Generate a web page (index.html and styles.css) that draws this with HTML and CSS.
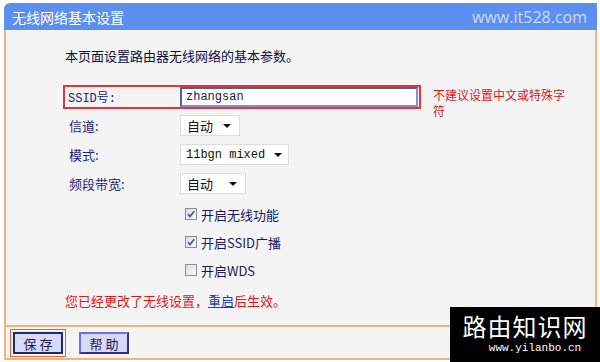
FILE: index.html
```html
<!DOCTYPE html>
<html lang="zh-CN">
<head>
  <meta charset="UTF-8" />
  <meta name="viewport" content="width=device-width, initial-scale=1.0"/>
  <title>无线网络基本设置</title>
  <link rel="stylesheet" href="styles.css">
</head>
<body>

  <div class="header">
    <span class="title">无线网络基本设置</span>
    <span class="site">www.it528.com</span>
  </div>

  <div class="panel">
    <p class="intro">本页面设置路由器无线网络的基本参数。</p>

    <div class="row ssid-row">
      <div class="ssid-box">
        <span class="label">SSID号:</span>
        <input class="text-input" type="text" value="zhangsan">
      </div>
      <span class="warn">不建议设置中文或特殊字<br>符</span>
    </div>

    <div class="row">
      <span class="label">信道:</span>
      <span class="select w-auto">自动 <i class="arrow"></i></span>
    </div>
    <div class="row">
      <span class="label">模式:</span>
      <span class="select w-mode mono">11bgn mixed <i class="arrow"></i></span>
    </div>
    <div class="row">
      <span class="label">频段带宽:</span>
      <span class="select w-band">自动 <i class="arrow"></i></span>
    </div>

    <div class="checks">
      <div class="check-row">
        <span class="box"><svg viewBox="0 0 10 10"><path d="M2 5.2 L4 7.5 L8.2 2.2" /></svg></span>
        <span>开启无线功能</span>
      </div>
      <div class="check-row">
        <span class="box"><svg viewBox="0 0 10 10"><path d="M2 5.2 L4 7.5 L8.2 2.2" /></svg></span>
        <span>开启SSID广播</span>
      </div>
      <div class="check-row">
        <span class="box"></span>
        <span>开启WDS</span>
      </div>
    </div>

    <p class="notice">您已经更改了无线设置，<a href="#">重启</a>后生效。</p>
  </div>

  <div class="footer">
    <span class="btn-focus"><button class="btn save">保 存</button></span>
    <button class="btn help">帮 助</button>
  </div>

  <div class="watermark">
    <div class="wm-name">路由知识网</div>
    <div class="wm-url">www.yilanbo.cn</div>
  </div>

</body>
</html>
```

FILE: styles.css
```css
body {
  margin: 0;
  background: #fff;
  font-family: "Noto Sans CJK SC", sans-serif;
  font-size: 13px;
  color: #1a1a50;
  width: 600px;
  height: 362px;
  overflow: hidden;
  position: relative;
}

.header {
  margin: 3px 3px 0 4px;
  height: 27px;
  background: #5c8ff0;
  border-top-left-radius: 6px;
  display: flex;
  align-items: center;
  justify-content: space-between;
  padding: 0 10px 0 8px;
}

.title {
  color: #fff;
  font-size: 14px;
}

.site {
  color: #cddcfa;
  font-family: "Open Sans", sans-serif;
  font-size: 16px;
}

.panel {
  margin: 0 3px 0 4px;
  height: 297px;
  background: #f4f4f4;
  border: 2px solid #f3b37a;
  border-top: none;
  padding-left: 59px;
  box-sizing: border-box;
}

.intro {
  margin: 0;
  padding-top: 16px;
  height: 42px;
  box-sizing: border-box;
  line-height: 20px;
  color: #101040;
}

.row {
  display: flex;
  align-items: center;
  height: 29px;
}

.ssid-row {
  height: 26px;
  margin: 13px 0 0 -2px;
  align-items: flex-start;
}

.ssid-box {
  display: flex;
  align-items: center;
  width: 358px;
  height: 24px;
  box-sizing: border-box;
  border: 2px solid #e03838;
  padding-left: 3px;
}

.label {
  width: 115px;
  box-sizing: border-box;
  color: #23237a;
  padding-left: 4px;
}

.ssid-box .label {
  width: 112px;
  padding-left: 0;
  font-family: "Liberation Mono", "Noto Sans CJK SC", monospace;
  font-size: 12px;
}

.text-input {
  width: 238px;
  height: 20px;
  box-sizing: border-box;
  border: 2px solid #5a5aa0;
  border-right-color: #8a8acc;
  border-bottom-color: #8a8acc;
  background: #fff;
  font-family: "Liberation Mono", monospace;
  font-size: 12px;
  color: #202040;
  padding: 0 4px;
}

.warn {
  margin: 2px 0 0 12px;
  color: #e01818;
  font-size: 12px;
  line-height: 16px;
}

.select {
  height: 21px;
  box-sizing: border-box;
  background: #fff;
  border: 1px solid #dedede;
  display: flex;
  align-items: center;
  justify-content: space-between;
  padding: 0 8px 0 6px;
  color: #111;
  font-size: 13px;
}

.mono {
  font-family: "Liberation Mono", monospace;
  font-size: 12px;
  padding: 0 6px 0 5px;
}

.arrow {
  width: 0;
  height: 0;
  border-left: 4px solid transparent;
  border-right: 4px solid transparent;
  border-top: 4px solid #111;
}

.w-auto { width: 60px; }
.w-mode { width: 109px; }
.w-band { width: 66px; }

.checks {
  margin-top: 2px;
}

.check-row {
  display: flex;
  align-items: center;
  height: 28px;
  margin-left: 120px;
  color: #1a1a60;
}

.box {
  width: 12px;
  height: 12px;
  box-sizing: border-box;
  border: 1px solid #8e8f8f;
  background: linear-gradient(135deg, #dcdcdc, #fafafa);
  margin-right: 4px;
  display: inline-flex;
}

.box svg {
  width: 10px;
  height: 10px;
  fill: none;
  stroke: #4a5f9a;
  stroke-width: 1.8;
}

.notice {
  margin: 3px 0 0 0;
  height: 28px;
  line-height: 28px;
  color: #e01818;
}

.notice a {
  color: #2040c0;
  text-decoration: underline;
}

.footer {
  margin: 0 3px 0 4px;
  height: 33px;
  box-sizing: border-box;
  border: 2px solid #f3b37a;
  border-top: none;
  background: #f4f4f4;
  display: flex;
  align-items: center;
  padding-left: 4px;
  gap: 13px;
}

.btn-focus {
  border: 1px solid #f06030;
  padding: 2px 2px;
  display: inline-flex;
}

.btn {
  width: 50px;
  height: 22px;
  font-family: "Noto Sans CJK SC", sans-serif;
  font-size: 13px;
  background: #d8d8f8;
  color: #1a1a50;
  padding: 0;
  cursor: pointer;
}

.save {
  border: 2px solid #1c2a6c;
}

.help {
  border: 2px solid #7070d8;
  border-right-color: #303090;
  border-bottom-color: #303090;
}

.watermark {
  position: absolute;
  right: 0;
  bottom: 0;
  width: 150px;
  height: 55px;
  background: #000;
  color: #fff;
  text-align: center;
}

.wm-name {
  font-family: "Noto Sans CJK SC", serif;
  font-size: 24px;
  line-height: 30px;
  margin-top: 4px;
  letter-spacing: 1px;
}

.wm-url {
  font-family: "Liberation Mono", monospace;
  font-size: 11px;
  line-height: 14px;
  padding-left: 20px;
}
```
